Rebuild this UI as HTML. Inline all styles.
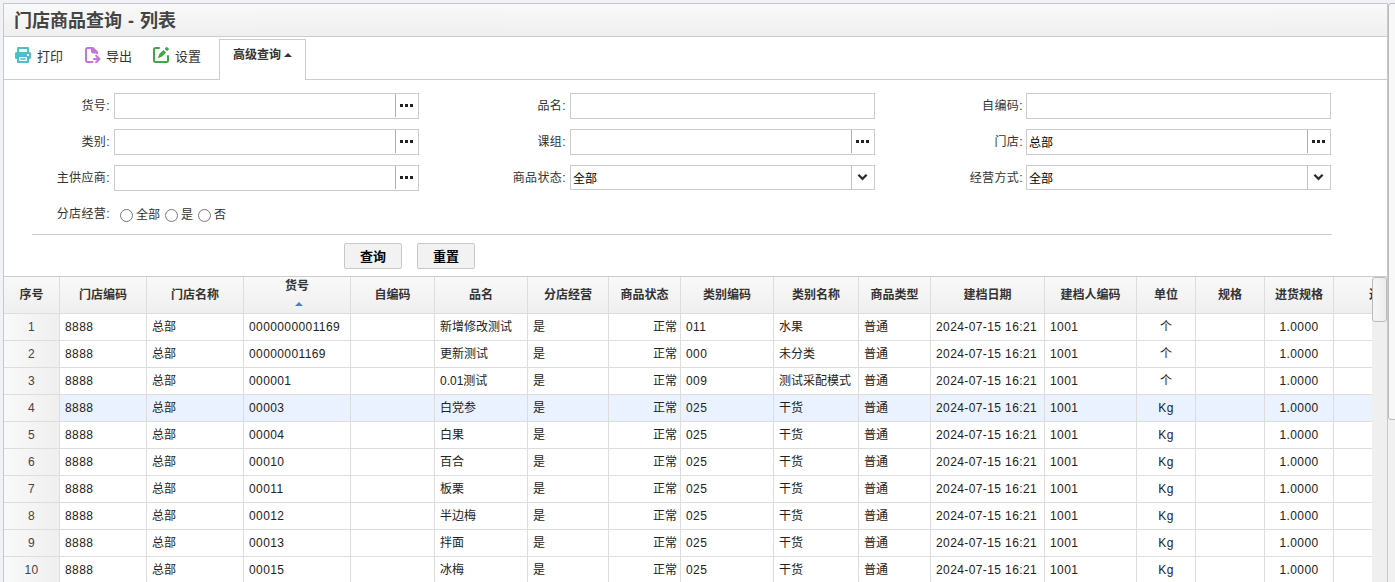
<!DOCTYPE html><html lang="zh-CN"><head><meta charset="utf-8"><title>门店商品查询 - 列表</title><style>*{box-sizing:border-box}
html,body{margin:0;padding:0}
body{width:1395px;height:582px;overflow:hidden;background:#f0f2f5;font-family:"Liberation Sans","Noto Sans CJK SC",sans-serif;font-size:12px;color:#333;position:relative}
.panel{position:absolute;left:3px;top:3px;width:1385px;height:640px;border:1px solid #c8c8c8;background:#fff}
.phead{position:absolute;left:0;top:0;width:1383px;height:33px;border-bottom:1px solid #ccc;background:linear-gradient(to bottom,#f9f9f9 0,#efefef 100%)}
.ptitle{position:absolute;left:10px;top:5px;font-size:18px;font-weight:bold;color:#444;line-height:24px;white-space:nowrap;word-spacing:1px}
.tbar{position:absolute;left:0;top:33px;width:1383px;height:43px;border-bottom:1px solid #ccc}
.tbtn{position:absolute;top:0;height:42px;font-size:13px;line-height:18px;color:#333;white-space:nowrap}
.tbtn svg{position:absolute;left:0;top:10px;width:16px;height:16px}
.tbtn span{position:absolute;left:22px;top:11px}
.tab{position:absolute;left:215px;top:2px;width:87px;height:41px;border:1px solid #ccc;border-bottom:none;background:#fff;font-size:12px;font-weight:bold;color:#333}
.tab span{position:absolute;left:13px;top:7px;line-height:16px;white-space:nowrap}
.tab i{position:absolute;left:64px;top:13px;width:0;height:0;border-left:4px solid transparent;border-right:4px solid transparent;border-bottom:4px solid #333}
.lbl{position:absolute;width:100px;margin-left:-1px;letter-spacing:.4px;text-align:right;line-height:26px;height:26px;font-size:12px;color:#333;white-space:nowrap}
.inp{position:absolute;width:305px;height:26px;border:1px solid #ccc;background:#fff;line-height:26px;padding-left:2px;font-size:12px;color:#000}
.inp .btn{position:absolute;right:0;top:0;width:23px;height:23px;border-left:1px solid #b0b0b0}
.inp .dots{position:absolute;right:5px;top:10px;width:13px;height:3px}
.inp .dots b{position:absolute;top:0;width:3px;height:3px;background:#222}
.radio{position:absolute;width:13px;height:13px;border:1px solid #767676;border-radius:50%;background:#fff}
.rt{position:absolute;line-height:16px;font-size:12px;white-space:nowrap}
.hr{position:absolute;left:28px;top:230px;width:1300px;height:1px;background:#ccc}
.qbtn{position:absolute;top:239px;width:58px;height:26px;border:1px solid #c8c8c8;border-radius:2px;background:#f2f2f2;font-size:13px;font-weight:bold;color:#000;text-align:center;line-height:26px}
.grid{position:absolute;left:0;top:272px;width:1383px;height:400px;border-top:1px solid #ccc;overflow:hidden}
.ghead{position:absolute;left:0;top:0;width:1500px;height:37px;border-bottom:1px solid #ddd;background:linear-gradient(to bottom,#f9f9f9 0,#efefef 100%)}
.hc{position:absolute;top:0;height:36px;border-right:1px solid #ddd;text-align:center;font-weight:bold;font-size:12px;color:#333;line-height:36px;white-space:nowrap;overflow:hidden}
.hc.sort{line-height:16px;padding-top:1px}
.hc.sort span{display:block}
.sarrow{position:absolute;left:50%;margin-left:-2.500px;top:25px;width:0;height:0;border-left:4.500px solid transparent;border-right:4.500px solid transparent;border-bottom:4.500px solid #4a80d2}
.grow{position:absolute;left:0;width:1500px;height:27px}
.grow.hl .gc{background:#eaf2ff}
.gc{position:absolute;top:0;height:27px;border-right:1px solid #ddd;border-bottom:1px solid #ddd;line-height:26px;padding:0 5px;white-space:nowrap;overflow:hidden;font-size:12px;color:#222;background:#fff}
.gc.rn,.grow.hl .gc.rn{background:linear-gradient(to right,#f9f9f9 0,#efefef 100%);padding:0;color:#444}
.al{text-align:left}.ar{text-align:right;padding-right:3px}.ac{text-align:center}
.vscroll{position:absolute;left:1368px;top:0;width:15px;height:400px;background:#efefef}
.vthumb{position:absolute;left:0;top:0;width:15px;height:45px;border:1px solid #bbb;border-radius:3px;background:linear-gradient(to right,#f6f6f6,#ececec)}
.oscroll{position:absolute;left:1388px;top:3px;width:7px;height:579px;background:#f1f1f1}
.othumb{position:absolute;left:0;top:0;width:10px;height:417px;border:1px solid #bbb;border-radius:3px;background:#f8f8f8}
.tbtn.exp span{left:21px}
.gc.n{letter-spacing:.4px}
.inp.sel{height:25px;line-height:27px}
.inp.sel .btn{height:23px;border-left-color:#c0c0c0}
</style></head><body>
<div class="panel">
<div class="phead"><div class="ptitle">门店商品查询 - 列表</div></div>
<div class="tbar">
<div class="tbtn" style="left:11px;width:50px"><svg viewBox="0 0 16 16"><path fill="#4fbecb" fill-rule="evenodd" d="M3 0h10a1 1 0 0 1 1 1v4h.500A1.500 1.500 0 0 1 16 6.500v4A1.500 1.500 0 0 1 14.500 12H14v3a1 1 0 0 1-1 1H3a1 1 0 0 1-1-1v-3h-.500A1.500 1.500 0 0 1 0 10.500v-4A1.500 1.500 0 0 1 1.500 5H2V1a1 1 0 0 1 1-1zM4 2v3h8V2zM12 7v2h2V7zM5 10a1 1 0 0 0-1 1v2a1 1 0 0 0 1 1h6a1 1 0 0 0 1-1v-2a1 1 0 0 0-1-1zM5.300 11.200h5.400v1.600H5.300z"/></svg><span>打印</span></div>
<div class="tbtn exp" style="left:81px;width:50px"><svg viewBox="0 0 16 16"><path fill="none" stroke="#c675de" stroke-width="2" stroke-linecap="round" stroke-linejoin="round" d="M7 1H2.500A1.500 1.500 0 0 0 1 2.500v11A1.500 1.500 0 0 0 2.500 15H7.500M8.800 12H14M11.200 8.800L14.400 12l-3.200 3.200M12 6.200V5.500"/><path fill="#c675de" d="M6 0h2.200L13 4.800V6.400H8A2 2 0 0 1 6 4.400z"/></svg><span>导出</span></div>
<div class="tbtn" style="left:149px;width:50px"><svg viewBox="0 0 16 16"><path fill="none" stroke="#3fa744" stroke-width="2" stroke-linecap="round" stroke-linejoin="round" d="M6 1H2.500A1.500 1.500 0 0 0 1 2.500v11A1.500 1.500 0 0 0 2.500 15h11A1.500 1.500 0 0 0 15 13.500V9"/><path fill="#3fa744" d="M4.800 11.300L6.500 6.800 10.500 3 13.100 5.600 9.200 9.500z"/><rect fill="#3fa744" x="12.100" y="0.500" width="3.600" height="3" rx="1.200" transform="rotate(45 13.900 2)"/></svg><span>设置</span></div>
<div class="tab"><span>高级查询</span><i></i></div>
</div>
<!-- form -->
<div class="lbl" style="left:7px;top:89px">货号:</div><div class="inp" style="left:110px;top:89px"><div class="btn"></div><div class="dots"><b style="left:0"></b><b style="left:5px"></b><b style="left:10px"></b></div></div>
<div class="lbl" style="left:7px;top:125px">类别:</div><div class="inp" style="left:110px;top:125px"><div class="btn"></div><div class="dots"><b style="left:0"></b><b style="left:5px"></b><b style="left:10px"></b></div></div>
<div class="lbl" style="left:7px;top:161px">主供应商:</div><div class="inp" style="left:110px;top:161px"><div class="btn"></div><div class="dots"><b style="left:0"></b><b style="left:5px"></b><b style="left:10px"></b></div></div>
<div class="lbl" style="left:463px;top:89px">品名:</div><div class="inp" style="left:566px;top:89px"></div>
<div class="lbl" style="left:463px;top:125px">课组:</div><div class="inp" style="left:566px;top:125px"><div class="btn"></div><div class="dots"><b style="left:0"></b><b style="left:5px"></b><b style="left:10px"></b></div></div>
<div class="lbl" style="left:463px;top:161px">商品状态:</div><div class="inp sel" style="left:566px;top:161px">全部<div class="btn"></div><svg class="chev" viewBox="0 0 12 8" style="position:absolute;right:6px;top:7px;width:11px;height:8px"><path d="M1.500 1.500L6 6l4.500-4.500" fill="none" stroke="#2b2b2b" stroke-width="2.400"/></svg></div>
<div class="lbl" style="left:920px;top:89px">自编码:</div><div class="inp" style="left:1022px;top:89px"></div>
<div class="lbl" style="left:920px;top:125px">门店:</div><div class="inp" style="left:1022px;top:125px">总部<div class="btn"></div><div class="dots"><b style="left:0"></b><b style="left:5px"></b><b style="left:10px"></b></div></div>
<div class="lbl" style="left:920px;top:161px">经营方式:</div><div class="inp sel" style="left:1022px;top:161px">全部<div class="btn"></div><svg class="chev" viewBox="0 0 12 8" style="position:absolute;right:6px;top:7px;width:11px;height:8px"><path d="M1.500 1.500L6 6l4.500-4.500" fill="none" stroke="#2b2b2b" stroke-width="2.400"/></svg></div>
<div class="lbl" style="left:7px;top:197px">分店经营:</div>
<div class="radio" style="left:116px;top:205px"></div><div class="rt" style="left:132px;top:203px">全部</div>
<div class="radio" style="left:161px;top:205px"></div><div class="rt" style="left:177px;top:203px">是</div>
<div class="radio" style="left:194px;top:205px"></div><div class="rt" style="left:210px;top:203px">否</div>
<div class="hr"></div>
<div class="qbtn" style="left:340px">查询</div>
<div class="qbtn" style="left:413px">重置</div>

<div class="grid">
<div class="ghead">
<div class="hc" style="left:0px;width:56px"><span>序号</span></div>
<div class="hc" style="left:56px;width:87px"><span>门店编码</span></div>
<div class="hc" style="left:143px;width:97px"><span>门店名称</span></div>
<div class="hc sort" style="left:240px;width:107px"><span>货号</span><i class="sarrow"></i></div>
<div class="hc" style="left:347px;width:84px"><span>自编码</span></div>
<div class="hc" style="left:431px;width:93px"><span>品名</span></div>
<div class="hc" style="left:524px;width:81px"><span>分店经营</span></div>
<div class="hc" style="left:605px;width:72px"><span>商品状态</span></div>
<div class="hc" style="left:677px;width:93px"><span>类别编码</span></div>
<div class="hc" style="left:770px;width:85px"><span>类别名称</span></div>
<div class="hc" style="left:855px;width:72px"><span>商品类型</span></div>
<div class="hc" style="left:927px;width:114px"><span>建档日期</span></div>
<div class="hc" style="left:1041px;width:92px"><span>建档人编码</span></div>
<div class="hc" style="left:1133px;width:59px"><span>单位</span></div>
<div class="hc" style="left:1192px;width:69px"><span>规格</span></div>
<div class="hc" style="left:1261px;width:69px"><span>进货规格</span></div>
<div class="hc" style="left:1330px;width:107px"><span>进货价</span></div>
</div>
<div class="grow" style="top:37px">
<div class="gc ac rn n" style="left:0px;width:56px"><span>1</span></div>
<div class="gc al n" style="left:56px;width:87px"><span>8888</span></div>
<div class="gc al" style="left:143px;width:97px"><span>总部</span></div>
<div class="gc al n" style="left:240px;width:107px"><span>0000000001169</span></div>
<div class="gc al" style="left:347px;width:84px"><span></span></div>
<div class="gc al" style="left:431px;width:93px"><span>新增修改测试</span></div>
<div class="gc al" style="left:524px;width:81px"><span>是</span></div>
<div class="gc ar" style="left:605px;width:72px"><span>正常</span></div>
<div class="gc al n" style="left:677px;width:93px"><span>011</span></div>
<div class="gc al" style="left:770px;width:85px"><span>水果</span></div>
<div class="gc al" style="left:855px;width:72px"><span>普通</span></div>
<div class="gc al n" style="left:927px;width:114px"><span>2024-07-15 16:21</span></div>
<div class="gc al n" style="left:1041px;width:92px"><span>1001</span></div>
<div class="gc ac" style="left:1133px;width:59px"><span>个</span></div>
<div class="gc al" style="left:1192px;width:69px"><span></span></div>
<div class="gc ac n" style="left:1261px;width:69px"><span>1.0000</span></div>
<div class="gc ac" style="left:1330px;width:107px"><span></span></div>
</div>
<div class="grow" style="top:64px">
<div class="gc ac rn n" style="left:0px;width:56px"><span>2</span></div>
<div class="gc al n" style="left:56px;width:87px"><span>8888</span></div>
<div class="gc al" style="left:143px;width:97px"><span>总部</span></div>
<div class="gc al n" style="left:240px;width:107px"><span>00000001169</span></div>
<div class="gc al" style="left:347px;width:84px"><span></span></div>
<div class="gc al" style="left:431px;width:93px"><span>更新测试</span></div>
<div class="gc al" style="left:524px;width:81px"><span>是</span></div>
<div class="gc ar" style="left:605px;width:72px"><span>正常</span></div>
<div class="gc al n" style="left:677px;width:93px"><span>000</span></div>
<div class="gc al" style="left:770px;width:85px"><span>未分类</span></div>
<div class="gc al" style="left:855px;width:72px"><span>普通</span></div>
<div class="gc al n" style="left:927px;width:114px"><span>2024-07-15 16:21</span></div>
<div class="gc al n" style="left:1041px;width:92px"><span>1001</span></div>
<div class="gc ac" style="left:1133px;width:59px"><span>个</span></div>
<div class="gc al" style="left:1192px;width:69px"><span></span></div>
<div class="gc ac n" style="left:1261px;width:69px"><span>1.0000</span></div>
<div class="gc ac" style="left:1330px;width:107px"><span></span></div>
</div>
<div class="grow" style="top:91px">
<div class="gc ac rn n" style="left:0px;width:56px"><span>3</span></div>
<div class="gc al n" style="left:56px;width:87px"><span>8888</span></div>
<div class="gc al" style="left:143px;width:97px"><span>总部</span></div>
<div class="gc al n" style="left:240px;width:107px"><span>000001</span></div>
<div class="gc al" style="left:347px;width:84px"><span></span></div>
<div class="gc al" style="left:431px;width:93px"><span>0.01测试</span></div>
<div class="gc al" style="left:524px;width:81px"><span>是</span></div>
<div class="gc ar" style="left:605px;width:72px"><span>正常</span></div>
<div class="gc al n" style="left:677px;width:93px"><span>009</span></div>
<div class="gc al" style="left:770px;width:85px"><span>测试采配模式</span></div>
<div class="gc al" style="left:855px;width:72px"><span>普通</span></div>
<div class="gc al n" style="left:927px;width:114px"><span>2024-07-15 16:21</span></div>
<div class="gc al n" style="left:1041px;width:92px"><span>1001</span></div>
<div class="gc ac" style="left:1133px;width:59px"><span>个</span></div>
<div class="gc al" style="left:1192px;width:69px"><span></span></div>
<div class="gc ac n" style="left:1261px;width:69px"><span>1.0000</span></div>
<div class="gc ac" style="left:1330px;width:107px"><span></span></div>
</div>
<div class="grow hl" style="top:118px">
<div class="gc ac rn n" style="left:0px;width:56px"><span>4</span></div>
<div class="gc al n" style="left:56px;width:87px"><span>8888</span></div>
<div class="gc al" style="left:143px;width:97px"><span>总部</span></div>
<div class="gc al n" style="left:240px;width:107px"><span>00003</span></div>
<div class="gc al" style="left:347px;width:84px"><span></span></div>
<div class="gc al" style="left:431px;width:93px"><span>白党参</span></div>
<div class="gc al" style="left:524px;width:81px"><span>是</span></div>
<div class="gc ar" style="left:605px;width:72px"><span>正常</span></div>
<div class="gc al n" style="left:677px;width:93px"><span>025</span></div>
<div class="gc al" style="left:770px;width:85px"><span>干货</span></div>
<div class="gc al" style="left:855px;width:72px"><span>普通</span></div>
<div class="gc al n" style="left:927px;width:114px"><span>2024-07-15 16:21</span></div>
<div class="gc al n" style="left:1041px;width:92px"><span>1001</span></div>
<div class="gc ac n" style="left:1133px;width:59px"><span>Kg</span></div>
<div class="gc al" style="left:1192px;width:69px"><span></span></div>
<div class="gc ac n" style="left:1261px;width:69px"><span>1.0000</span></div>
<div class="gc ac" style="left:1330px;width:107px"><span></span></div>
</div>
<div class="grow" style="top:145px">
<div class="gc ac rn n" style="left:0px;width:56px"><span>5</span></div>
<div class="gc al n" style="left:56px;width:87px"><span>8888</span></div>
<div class="gc al" style="left:143px;width:97px"><span>总部</span></div>
<div class="gc al n" style="left:240px;width:107px"><span>00004</span></div>
<div class="gc al" style="left:347px;width:84px"><span></span></div>
<div class="gc al" style="left:431px;width:93px"><span>白果</span></div>
<div class="gc al" style="left:524px;width:81px"><span>是</span></div>
<div class="gc ar" style="left:605px;width:72px"><span>正常</span></div>
<div class="gc al n" style="left:677px;width:93px"><span>025</span></div>
<div class="gc al" style="left:770px;width:85px"><span>干货</span></div>
<div class="gc al" style="left:855px;width:72px"><span>普通</span></div>
<div class="gc al n" style="left:927px;width:114px"><span>2024-07-15 16:21</span></div>
<div class="gc al n" style="left:1041px;width:92px"><span>1001</span></div>
<div class="gc ac n" style="left:1133px;width:59px"><span>Kg</span></div>
<div class="gc al" style="left:1192px;width:69px"><span></span></div>
<div class="gc ac n" style="left:1261px;width:69px"><span>1.0000</span></div>
<div class="gc ac" style="left:1330px;width:107px"><span></span></div>
</div>
<div class="grow" style="top:172px">
<div class="gc ac rn n" style="left:0px;width:56px"><span>6</span></div>
<div class="gc al n" style="left:56px;width:87px"><span>8888</span></div>
<div class="gc al" style="left:143px;width:97px"><span>总部</span></div>
<div class="gc al n" style="left:240px;width:107px"><span>00010</span></div>
<div class="gc al" style="left:347px;width:84px"><span></span></div>
<div class="gc al" style="left:431px;width:93px"><span>百合</span></div>
<div class="gc al" style="left:524px;width:81px"><span>是</span></div>
<div class="gc ar" style="left:605px;width:72px"><span>正常</span></div>
<div class="gc al n" style="left:677px;width:93px"><span>025</span></div>
<div class="gc al" style="left:770px;width:85px"><span>干货</span></div>
<div class="gc al" style="left:855px;width:72px"><span>普通</span></div>
<div class="gc al n" style="left:927px;width:114px"><span>2024-07-15 16:21</span></div>
<div class="gc al n" style="left:1041px;width:92px"><span>1001</span></div>
<div class="gc ac n" style="left:1133px;width:59px"><span>Kg</span></div>
<div class="gc al" style="left:1192px;width:69px"><span></span></div>
<div class="gc ac n" style="left:1261px;width:69px"><span>1.0000</span></div>
<div class="gc ac" style="left:1330px;width:107px"><span></span></div>
</div>
<div class="grow" style="top:199px">
<div class="gc ac rn n" style="left:0px;width:56px"><span>7</span></div>
<div class="gc al n" style="left:56px;width:87px"><span>8888</span></div>
<div class="gc al" style="left:143px;width:97px"><span>总部</span></div>
<div class="gc al n" style="left:240px;width:107px"><span>00011</span></div>
<div class="gc al" style="left:347px;width:84px"><span></span></div>
<div class="gc al" style="left:431px;width:93px"><span>板栗</span></div>
<div class="gc al" style="left:524px;width:81px"><span>是</span></div>
<div class="gc ar" style="left:605px;width:72px"><span>正常</span></div>
<div class="gc al n" style="left:677px;width:93px"><span>025</span></div>
<div class="gc al" style="left:770px;width:85px"><span>干货</span></div>
<div class="gc al" style="left:855px;width:72px"><span>普通</span></div>
<div class="gc al n" style="left:927px;width:114px"><span>2024-07-15 16:21</span></div>
<div class="gc al n" style="left:1041px;width:92px"><span>1001</span></div>
<div class="gc ac n" style="left:1133px;width:59px"><span>Kg</span></div>
<div class="gc al" style="left:1192px;width:69px"><span></span></div>
<div class="gc ac n" style="left:1261px;width:69px"><span>1.0000</span></div>
<div class="gc ac" style="left:1330px;width:107px"><span></span></div>
</div>
<div class="grow" style="top:226px">
<div class="gc ac rn n" style="left:0px;width:56px"><span>8</span></div>
<div class="gc al n" style="left:56px;width:87px"><span>8888</span></div>
<div class="gc al" style="left:143px;width:97px"><span>总部</span></div>
<div class="gc al n" style="left:240px;width:107px"><span>00012</span></div>
<div class="gc al" style="left:347px;width:84px"><span></span></div>
<div class="gc al" style="left:431px;width:93px"><span>半边梅</span></div>
<div class="gc al" style="left:524px;width:81px"><span>是</span></div>
<div class="gc ar" style="left:605px;width:72px"><span>正常</span></div>
<div class="gc al n" style="left:677px;width:93px"><span>025</span></div>
<div class="gc al" style="left:770px;width:85px"><span>干货</span></div>
<div class="gc al" style="left:855px;width:72px"><span>普通</span></div>
<div class="gc al n" style="left:927px;width:114px"><span>2024-07-15 16:21</span></div>
<div class="gc al n" style="left:1041px;width:92px"><span>1001</span></div>
<div class="gc ac n" style="left:1133px;width:59px"><span>Kg</span></div>
<div class="gc al" style="left:1192px;width:69px"><span></span></div>
<div class="gc ac n" style="left:1261px;width:69px"><span>1.0000</span></div>
<div class="gc ac" style="left:1330px;width:107px"><span></span></div>
</div>
<div class="grow" style="top:253px">
<div class="gc ac rn n" style="left:0px;width:56px"><span>9</span></div>
<div class="gc al n" style="left:56px;width:87px"><span>8888</span></div>
<div class="gc al" style="left:143px;width:97px"><span>总部</span></div>
<div class="gc al n" style="left:240px;width:107px"><span>00013</span></div>
<div class="gc al" style="left:347px;width:84px"><span></span></div>
<div class="gc al" style="left:431px;width:93px"><span>拌面</span></div>
<div class="gc al" style="left:524px;width:81px"><span>是</span></div>
<div class="gc ar" style="left:605px;width:72px"><span>正常</span></div>
<div class="gc al n" style="left:677px;width:93px"><span>025</span></div>
<div class="gc al" style="left:770px;width:85px"><span>干货</span></div>
<div class="gc al" style="left:855px;width:72px"><span>普通</span></div>
<div class="gc al n" style="left:927px;width:114px"><span>2024-07-15 16:21</span></div>
<div class="gc al n" style="left:1041px;width:92px"><span>1001</span></div>
<div class="gc ac n" style="left:1133px;width:59px"><span>Kg</span></div>
<div class="gc al" style="left:1192px;width:69px"><span></span></div>
<div class="gc ac n" style="left:1261px;width:69px"><span>1.0000</span></div>
<div class="gc ac" style="left:1330px;width:107px"><span></span></div>
</div>
<div class="grow" style="top:280px">
<div class="gc ac rn n" style="left:0px;width:56px"><span>10</span></div>
<div class="gc al n" style="left:56px;width:87px"><span>8888</span></div>
<div class="gc al" style="left:143px;width:97px"><span>总部</span></div>
<div class="gc al n" style="left:240px;width:107px"><span>00015</span></div>
<div class="gc al" style="left:347px;width:84px"><span></span></div>
<div class="gc al" style="left:431px;width:93px"><span>冰梅</span></div>
<div class="gc al" style="left:524px;width:81px"><span>是</span></div>
<div class="gc ar" style="left:605px;width:72px"><span>正常</span></div>
<div class="gc al n" style="left:677px;width:93px"><span>025</span></div>
<div class="gc al" style="left:770px;width:85px"><span>干货</span></div>
<div class="gc al" style="left:855px;width:72px"><span>普通</span></div>
<div class="gc al n" style="left:927px;width:114px"><span>2024-07-15 16:21</span></div>
<div class="gc al n" style="left:1041px;width:92px"><span>1001</span></div>
<div class="gc ac n" style="left:1133px;width:59px"><span>Kg</span></div>
<div class="gc al" style="left:1192px;width:69px"><span></span></div>
<div class="gc ac n" style="left:1261px;width:69px"><span>1.0000</span></div>
<div class="gc ac" style="left:1330px;width:107px"><span></span></div>
</div>
<div class="grow" style="top:307px">
<div class="gc ac rn n" style="left:0px;width:56px"><span>11</span></div>
<div class="gc al n" style="left:56px;width:87px"><span>8888</span></div>
<div class="gc al" style="left:143px;width:97px"><span>总部</span></div>
<div class="gc al n" style="left:240px;width:107px"><span>00016</span></div>
<div class="gc al" style="left:347px;width:84px"><span></span></div>
<div class="gc al" style="left:431px;width:93px"><span>薄荷</span></div>
<div class="gc al" style="left:524px;width:81px"><span>是</span></div>
<div class="gc ar" style="left:605px;width:72px"><span>正常</span></div>
<div class="gc al n" style="left:677px;width:93px"><span>025</span></div>
<div class="gc al" style="left:770px;width:85px"><span>干货</span></div>
<div class="gc al" style="left:855px;width:72px"><span>普通</span></div>
<div class="gc al n" style="left:927px;width:114px"><span>2024-07-15 16:21</span></div>
<div class="gc al n" style="left:1041px;width:92px"><span>1001</span></div>
<div class="gc ac n" style="left:1133px;width:59px"><span>Kg</span></div>
<div class="gc al" style="left:1192px;width:69px"><span></span></div>
<div class="gc ac n" style="left:1261px;width:69px"><span>1.0000</span></div>
<div class="gc ac" style="left:1330px;width:107px"><span></span></div>
</div>
<div class="vscroll"><div class="vthumb"></div></div>
</div>
</div>
<div class="oscroll"><div class="othumb"></div></div>
</body></html>
